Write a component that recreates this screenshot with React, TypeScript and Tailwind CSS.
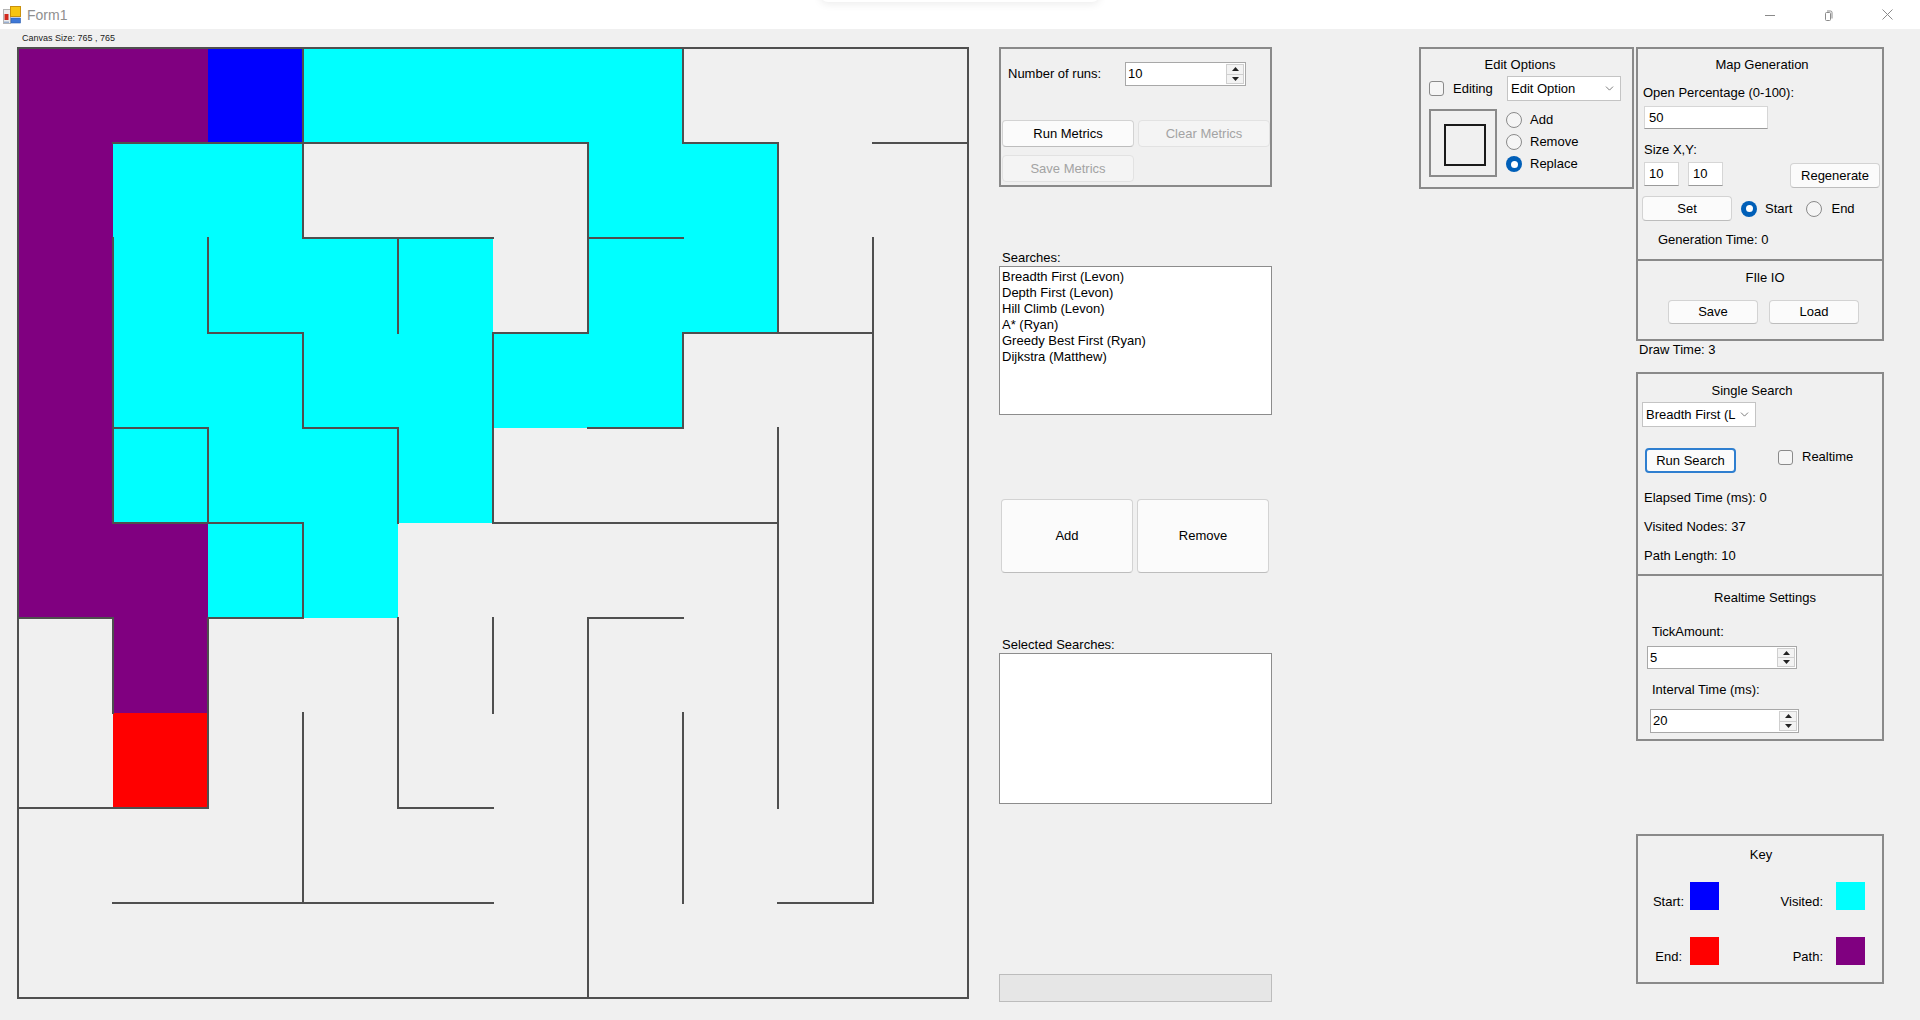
import React from "react";
import { ChevronDown } from "lucide-react";

const CELL = 95;
const OFF = 1;

type Fill = [number, number, string];
const PURPLE = "#800080";
const CYAN = "#00ffff";
const BLUE = "#0000ff";
const RED = "#ff0000";

const fills: Fill[] = [
  [0, 0, PURPLE], [0, 1, PURPLE], [0, 2, BLUE], [0, 3, CYAN], [0, 4, CYAN], [0, 5, CYAN], [0, 6, CYAN],
  [1, 0, PURPLE], [1, 1, CYAN], [1, 2, CYAN], [1, 6, CYAN], [1, 7, CYAN],
  [2, 0, PURPLE], [2, 1, CYAN], [2, 2, CYAN], [2, 3, CYAN], [2, 4, CYAN], [2, 6, CYAN], [2, 7, CYAN],
  [3, 0, PURPLE], [3, 1, CYAN], [3, 2, CYAN], [3, 3, CYAN], [3, 4, CYAN], [3, 5, CYAN], [3, 6, CYAN],
  [4, 0, PURPLE], [4, 1, CYAN], [4, 2, CYAN], [4, 3, CYAN], [4, 4, CYAN],
  [5, 0, PURPLE], [5, 1, PURPLE], [5, 2, CYAN], [5, 3, CYAN],
  [6, 1, PURPLE],
  [7, 1, RED],
];

// [row, c0, c1]
const hWalls: [number, number, number][] = [
  [0, 0, 10],
  [1, 1, 6], [1, 7, 8], [1, 9, 10],
  [2, 3, 5], [2, 6, 7],
  [3, 2, 3], [3, 5, 6], [3, 7, 9],
  [4, 1, 2], [4, 3, 4], [4, 6, 7],
  [5, 1, 3], [5, 5, 8],
  [6, 0, 1], [6, 2, 3], [6, 6, 7],
  [8, 0, 2], [8, 4, 5],
  [9, 1, 5], [9, 8, 9],
  [10, 0, 10],
];
// [col, r0, r1]
const vWalls: [number, number, number][] = [
  [0, 0, 10], [10, 0, 10],
  [1, 2, 5], [1, 6, 7],
  [2, 2, 3], [2, 4, 5], [2, 6, 8],
  [3, 0, 2], [3, 3, 4], [3, 5, 6], [3, 7, 9],
  [4, 2, 3], [4, 4, 5], [4, 6, 8],
  [5, 3, 5], [5, 6, 7],
  [6, 1, 3], [6, 6, 10],
  [7, 0, 1], [7, 3, 4], [7, 7, 9],
  [8, 1, 3], [8, 4, 8],
  [9, 2, 9],
];

function Maze() {
  const p = (k: number) => OFF + CELL * k;
  return (
    <svg width={952} height={952} viewBox="0 0 952 952" className="block">
      {fills.map(([r, c, col], i) => (
        <rect key={i} x={p(c)} y={p(r)} width={CELL} height={CELL} fill={col} />
      ))}
      {hWalls.map(([r, c0, c1], i) => (
        <line key={"h" + i} x1={p(c0) - 1} y1={p(r)} x2={p(c1) + 1} y2={p(r)} stroke="#4f4f4f" strokeWidth={2} />
      ))}
      {vWalls.map(([c, r0, r1], i) => (
        <line key={"v" + i} x1={p(c)} y1={p(r0) - 1} x2={p(c)} y2={p(r1) + 1} stroke="#4f4f4f" strokeWidth={2} />
      ))}
    </svg>
  );
}

function AppIcon() {
  return (
    <svg width="18" height="18" viewBox="0 0 18 18">
      <rect x="0.5" y="3.5" width="7" height="14" fill="#ececec" stroke="#b4b4b4" />
      <rect x="1.5" y="8" width="4" height="6" fill="#d22a1e" />
      <rect x="7.5" y="0.5" width="10" height="10" fill="#f6c511" stroke="#c9900c" />
      <rect x="8" y="12" width="9.5" height="5" fill="#3f78d6" stroke="#2d5eb0" strokeWidth="0.6" />
      <rect x="1" y="15.5" width="5" height="1.5" fill="#9ab0d0" />
    </svg>
  );
}

function Btn({ children, className = "", disabled = false }: { children: React.ReactNode; className?: string; disabled?: boolean }) {
  return (
    <div
      className={
        disabled
          ? `flex items-center justify-center rounded-[4px] border border-[#e2e2e2] bg-[#f4f4f4] text-[#a3a3a3] ${className}`
          : `flex items-center justify-center rounded-[4px] border border-[#d3d3d3] border-b-[#bdbdbd] bg-[#fbfbfb] text-black ${className}`
      }
    >
      {children}
    </div>
  );
}

function TextBox({ value, className = "" }: { value: string; className?: string }) {
  return (
    <div className={`flex items-center bg-white border border-[#d6d6d6] border-b-[#9a9a9a] pl-[4px] ${className}`}>{value}</div>
  );
}

function Numeric({ value, className = "" }: { value: string; className?: string }) {
  return (
    <div className={`flex bg-white border border-[#a8a8a8] ${className}`}>
      <div className="flex-1 flex items-center pl-[2px]">{value}</div>
      <div className="w-[18px] my-[1px] mr-[1px] flex flex-col border border-[#cfcfcf] bg-[#f3f3f3]">
        <div className="flex-1 flex items-center justify-center border-b border-[#cfcfcf]">
          <svg width="7" height="4" viewBox="0 0 7 4">
            <path d="M0 4 L3.5 0 L7 4 Z" fill="#222" />
          </svg>
        </div>
        <div className="flex-1 flex items-center justify-center">
          <svg width="7" height="4" viewBox="0 0 7 4">
            <path d="M0 0 L3.5 4 L7 0 Z" fill="#222" />
          </svg>
        </div>
      </div>
    </div>
  );
}

function Combo({ value, className = "" }: { value: string; className?: string }) {
  return (
    <div className={`flex items-center bg-white border border-[#c4c4c4] pl-[3px] pr-[4px] ${className}`}>
      <span className="flex-1 whitespace-nowrap overflow-hidden">{value}</span>
      <ChevronDown size={13} strokeWidth={1.4} color="#555" />
    </div>
  );
}

function Radio({ checked = false }: { checked?: boolean }) {
  return checked ? (
    <div className="w-[16px] h-[16px] shrink-0 rounded-full bg-[#005fb8] flex items-center justify-center">
      <div className="w-[7px] h-[7px] rounded-full bg-white" />
    </div>
  ) : (
    <div className="w-[16px] h-[16px] shrink-0 rounded-full border border-[#8a8a8a] bg-[#f5f5f5]" />
  );
}

function Check() {
  return <div className="w-[15px] h-[15px] shrink-0 rounded-[3px] border border-[#8a8a8a] bg-[#f5f5f5]" />;
}

export default function App() {
  return (
    <div className="relative w-[1920px] h-[1020px] overflow-hidden bg-[#f0f0f0] flex flex-col font-['Liberation_Sans',Arial,sans-serif] text-[13px] leading-[16px] text-black">
      {/* Title bar */}
      <div className="relative h-[29px] shrink-0 bg-white flex items-center">
        <div className="ml-[3px] w-[18px] h-[18px]">
          <AppIcon />
        </div>
        <span className="ml-[6px] text-[14px] text-[#8f8f8f]">Form1</span>
        <div className="absolute left-[820px] top-[-14px] w-[280px] h-[16px] rounded-[8px] shadow-[0_2px_8px_rgba(0,0,0,0.08)] bg-white" />
        <div className="ml-auto mr-[3px] flex items-center h-full">
          <div className="w-[58px] h-full flex items-center justify-center">
            <svg width="10" height="10" viewBox="0 0 10 10">
              <line x1="0" y1="5.5" x2="10" y2="5.5" stroke="#8a8a8a" strokeWidth="1" />
            </svg>
          </div>
          <div className="w-[58px] h-full flex items-center justify-center">
            <svg width="10" height="12" viewBox="0 0 10 12">
              <rect x="2.5" y="3.5" width="5" height="8" rx="1" fill="none" stroke="#8a8a8a" strokeWidth="1" />
              <path d="M4 2 H7.5 Q9 2 9 3.5 V9.5" fill="none" stroke="#8a8a8a" strokeWidth="1" />
            </svg>
          </div>
          <div className="w-[60px] h-full flex items-center justify-center">
            <svg width="11" height="11" viewBox="0 0 11 11">
              <path d="M0.5 0.5 L10.5 10.5 M10.5 0.5 L0.5 10.5" stroke="#8a8a8a" strokeWidth="1" />
            </svg>
          </div>
        </div>
      </div>

      {/* Body */}
      <div className="flex flex-1">
        {/* Canvas column */}
        <div className="ml-[17px] w-[952px] flex flex-col">
          <div className="h-[18px] flex items-center pl-[5px] text-[9px] leading-none text-[#222]">Canvas Size: 765 , 765</div>
          <Maze />
        </div>

        {/* Middle column */}
        <div className="ml-[30px] w-[273px] pt-[18px] flex flex-col">
          <div className="h-[140px] border-2 border-[#8a8a8a] flex flex-col">
            <div className="mt-[13px] h-[24px] flex items-center">
              <div className="w-[124px] pl-[7px] shrink-0">Number of runs:</div>
              <Numeric value="10" className="w-[121px] h-[24px]" />
            </div>
            <div className="mt-[34px] pl-[1px] flex gap-[4px]">
              <Btn className="w-[132px] h-[27px]">Run Metrics</Btn>
              <Btn disabled className="w-[132px] h-[27px]">Clear Metrics</Btn>
            </div>
            <div className="mt-[8px] pl-[1px] flex">
              <Btn disabled className="w-[132px] h-[27px]">Save Metrics</Btn>
            </div>
          </div>

          <div className="mt-[63px] h-[16px] pl-[3px]">Searches:</div>
          <div className="h-[149px] bg-white border border-[#8c8c8c] pt-[2px] pl-[2px] flex flex-col">
            <div>Breadth First (Levon)</div>
            <div>Depth First (Levon)</div>
            <div>Hill Climb (Levon)</div>
            <div>A* (Ryan)</div>
            <div>Greedy Best First (Ryan)</div>
            <div>Dijkstra (Matthew)</div>
          </div>

          <div className="mt-[84px] ml-[2px] flex gap-[4px]">
            <Btn className="w-[132px] h-[74px]">Add</Btn>
            <Btn className="w-[132px] h-[74px]">Remove</Btn>
          </div>

          <div className="mt-[64px] h-[16px] pl-[3px]">Selected Searches:</div>
          <div className="h-[151px] bg-white border border-[#8c8c8c]" />

          <div className="mt-[170px] h-[28px] bg-[#e6e6e6] border border-[#bcbcbc]" />
        </div>

        {/* Edit Options column */}
        <div className="ml-[147px] w-[215px] pt-[18px] flex flex-col">
          <div className="h-[142px] border-2 border-[#8a8a8a] flex flex-col">
            <div className="mt-[8px] h-[16px] text-center pr-[13px]">Edit Options</div>
            <div className="mt-[3px] h-[25px] flex items-center">
              <div className="ml-[8px]">
                <Check />
              </div>
              <div className="ml-[9px] w-[54px] shrink-0">Editing</div>
              <Combo value="Edit Option" className="w-[114px] h-[25px]" />
            </div>
            <div className="mt-[8px] flex">
              <div className="ml-[8px] w-[68px] h-[68px] border-2 border-[#8a8a8a] pt-[13px] pl-[13px]">
                <div className="w-[42px] h-[42px] border-2 border-[#1a1a1a]" />
              </div>
              <div className="ml-[9px] flex flex-col">
                <div className="h-[22px] flex items-center">
                  <Radio />
                  <span className="ml-[8px]">Add</span>
                </div>
                <div className="h-[22px] flex items-center">
                  <Radio />
                  <span className="ml-[8px]">Remove</span>
                </div>
                <div className="h-[22px] flex items-center">
                  <Radio checked />
                  <span className="ml-[8px]">Replace</span>
                </div>
              </div>
            </div>
          </div>
        </div>

        {/* Right column */}
        <div className="ml-[2px] w-[248px] pt-[18px] flex flex-col">
          {/* Map Generation */}
          <div className="h-[214px] border-2 border-[#8a8a8a] flex flex-col">
            <div className="mt-[8px] h-[16px] text-center pl-[4px]">Map Generation</div>
            <div className="mt-[12px] h-[16px] pl-[5px]">Open Percentage (0-100):</div>
            <TextBox value="50" className="mt-[5px] ml-[6px] w-[124px] h-[23px]" />
            <div className="mt-[13px] h-[16px] pl-[6px]">Size X,Y:</div>
            <div className="mt-[4px] flex items-start">
              <TextBox value="10" className="ml-[6px] w-[35px] h-[24px]" />
              <TextBox value="10" className="ml-[9px] w-[35px] h-[24px]" />
              <Btn className="ml-[67px] mt-[1px] w-[90px] h-[25px]">Regenerate</Btn>
            </div>
            <div className="mt-[8px] h-[25px] flex items-center">
              <Btn className="ml-[4px] w-[90px] h-[25px]">Set</Btn>
              <div className="ml-[9px]">
                <Radio checked />
              </div>
              <span className="ml-[8px]">Start</span>
              <div className="ml-[14px]">
                <Radio />
              </div>
              <span className="ml-[9px]">End</span>
            </div>
            <div className="mt-[11px] h-[16px] pl-[20px]">Generation Time: 0</div>
          </div>

          {/* File IO */}
          <div className="h-[80px] border-2 border-t-0 border-[#8a8a8a] flex flex-col">
            <div className="mt-[9px] h-[16px] text-center pl-[10px]">FIle IO</div>
            <div className="mt-[14px] flex">
              <Btn className="ml-[30px] w-[90px] h-[24px]">Save</Btn>
              <Btn className="ml-[11px] w-[90px] h-[24px]">Load</Btn>
            </div>
          </div>

          <div className="mt-[1px] h-[16px] pl-[3px]">Draw Time: 3</div>

          {/* Single Search */}
          <div className="mt-[14px] h-[204px] border-2 border-[#8a8a8a] flex flex-col">
            <div className="mt-[9px] h-[16px] text-center pr-[16px]">Single Search</div>
            <Combo value="Breadth First (L" className="mt-[3px] ml-[4px] w-[114px] h-[25px]" />
            <div className="mt-[21px] flex items-start">
              <div className="ml-[7px] w-[91px] h-[25px] flex items-center justify-center rounded-[4px] border-2 border-[#2f7fd0] bg-[#fbfbfb]">
                Run Search
              </div>
              <div className="ml-[42px] mt-[2px]">
                <Check />
              </div>
              <span className="ml-[9px] mt-[1px]">Realtime</span>
            </div>
            <div className="mt-[17px] h-[16px] pl-[6px]">Elapsed Time (ms): 0</div>
            <div className="mt-[13px] h-[16px] pl-[6px]">Visited Nodes: 37</div>
            <div className="mt-[13px] h-[16px] pl-[6px]">Path Length: 10</div>
          </div>

          {/* Realtime Settings */}
          <div className="h-[165px] border-2 border-t-0 border-[#8a8a8a] flex flex-col">
            <div className="mt-[14px] h-[16px] text-center pl-[10px]">Realtime Settings</div>
            <div className="mt-[18px] h-[16px] pl-[14px]">TickAmount:</div>
            <Numeric value="5" className="mt-[6px] ml-[9px] w-[150px] h-[23px]" />
            <div className="mt-[13px] h-[16px] pl-[14px]">Interval Time (ms):</div>
            <Numeric value="20" className="mt-[11px] ml-[12px] w-[149px] h-[24px]" />
          </div>

          {/* Key */}
          <div className="mt-[93px] h-[150px] border-2 border-[#8a8a8a] flex flex-col">
            <div className="mt-[11px] h-[16px] text-center pl-[2px]">Key</div>
            <div className="mt-[19px] h-[28px] flex items-end">
              <div className="w-[46px] text-right">Start:</div>
              <div className="ml-[6px] w-[29px] h-[28px] bg-[#0000ff]" />
              <div className="w-[104px] text-right">Visited:</div>
              <div className="ml-[13px] w-[29px] h-[28px] bg-[#00ffff]" />
            </div>
            <div className="mt-[27px] h-[28px] flex items-end">
              <div className="w-[44px] text-right">End:</div>
              <div className="ml-[8px] w-[29px] h-[28px] bg-[#ff0000]" />
              <div className="w-[104px] text-right">Path:</div>
              <div className="ml-[13px] w-[29px] h-[28px] bg-[#800080]" />
            </div>
          </div>
        </div>
      </div>
    </div>
  );
}
